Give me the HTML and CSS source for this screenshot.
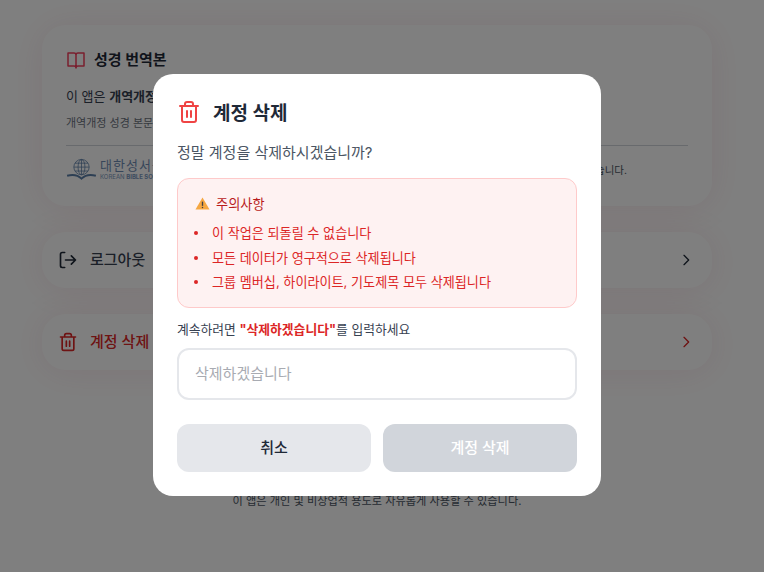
FILE: index.html
```html
<!DOCTYPE html>
<html lang="ko">
<head>
<meta charset="utf-8">
<title>계정 삭제</title>
<link rel="stylesheet" href="styles.css">
</head>
<body>
<main class="page">
  <section class="card info">
    <h2 class="info-title">
      <svg class="book" viewBox="0 0 20 20" fill="none" stroke="#f43f5e" stroke-width="1.500" stroke-linejoin="round" stroke-linecap="round"><path d="M10 18V5a2 2 0 0 0-2-2H2v13h6a2 2 0 0 1 2 2 2 2 0 0 1 2-2h6V3h-6a2 2 0 0 0-2 2"/></svg>
      <span>성경 번역본</span>
    </h2>
    <p class="info-main">이 앱은 <strong>개역개정 성경</strong>을 사용합니다.</p>
    <p class="info-sub">개역개정 성경 본문의 저작권은 대한성서공회에 있습니다.</p>
    <div class="info-foot">
      <div class="logo">
        <svg class="logo-mark" viewBox="0 0 32 24" fill="none" stroke="#5b7fa8" stroke-width="0.8">
          <circle cx="16" cy="9.500" r="8"/><ellipse cx="16" cy="9.500" rx="3.600" ry="8"/><path d="M16 1.500v16M8 9.500h16M9.200 5.400h13.600M9.200 13.600h13.600"/>
          <path d="M1 18.500c5-1.400 11-1 15 3 4-4 10-4.400 15-3" stroke-width="2"/>
        </svg>
        <div class="logo-text"><span class="logo-ko">대한성서공회</span><span class="logo-en">KOREAN <b>BIBLE SOCIETY</b></span></div>
      </div>
      <p class="foot-note">이 성경은 대한성서공회의 허락을 받아 사용하고 있습니다.</p>
    </div>
  </section>

  <button class="card row">
    <svg class="row-icon" viewBox="0 0 24 24" fill="none" stroke="#1f2937" stroke-width="2" stroke-linecap="round" stroke-linejoin="round"><path d="M8 3H5a2 2 0 0 0-2 2v14a2 2 0 0 0 2 2h3"/><path d="M9 12h12M16 7l5 5-5 5"/></svg>
    <span class="row-label">로그아웃</span>
    <svg class="chev" viewBox="0 0 24 24" fill="none" stroke="#1f2937" stroke-width="2" stroke-linecap="round" stroke-linejoin="round"><path d="m9 5 7 7-7 7"/></svg>
  </button>
  <button class="card row danger">
    <svg class="row-icon" viewBox="0 0 24 24" fill="none" stroke="#dc2626" stroke-width="2" stroke-linecap="round" stroke-linejoin="round"><path d="M3 6h18M8 6V4a2 2 0 0 1 2-2h4a2 2 0 0 1 2 2v2M5 6v14a2 2 0 0 0 2 2h10a2 2 0 0 0 2-2V6M10 11v6M14 11v6"/></svg>
    <span class="row-label">계정 삭제</span>
    <svg class="chev" viewBox="0 0 24 24" fill="none" stroke="#dc2626" stroke-width="2" stroke-linecap="round" stroke-linejoin="round"><path d="m9 5 7 7-7 7"/></svg>
  </button>
  <p class="footer">이 앱은 개인 및 비상업적 용도로 자유롭게 사용할 수 있습니다.</p>
</main>

<div class="overlay">
  <div class="dialog">
    <div class="dialog-head">
      <svg class="dialog-icon" viewBox="0 0 24 24" fill="none" stroke="#ef4444" stroke-width="2" stroke-linecap="round" stroke-linejoin="round"><path d="M3 6h18M8 6V4a2 2 0 0 1 2-2h4a2 2 0 0 1 2 2v2M5 6v14a2 2 0 0 0 2 2h10a2 2 0 0 0 2-2V6M10 11v6M14 11v6"/></svg>
      <h1>계정 삭제</h1>
    </div>
    <p class="question">정말 계정을 삭제하시겠습니까?</p>
    <div class="warning">
      <div class="warning-title">
        <svg class="warn-icon" viewBox="0 0 16 16"><path d="M8 1.500 15.500 14.500H.5Z" fill="#f5a742"/><path d="M8 6v4.500" stroke="#3f3f46" stroke-width="1.400"/><circle cx="8" cy="12.300" r=".8" fill="#3f3f46"/></svg>
        <span>주의사항</span>
      </div>
      <ul>
        <li>이 작업은 되돌릴 수 없습니다</li>
        <li>모든 데이터가 영구적으로 삭제됩니다</li>
        <li>그룹 멤버십, 하이라이트, 기도제목 모두 삭제됩니다</li>
      </ul>
    </div>
    <label class="confirm-label" for="confirm">계속하려면 <strong>"삭제하겠습니다"</strong>를 입력하세요</label>
    <input class="confirm-input" id="confirm" type="text" placeholder="삭제하겠습니다">
    <div class="actions">
      <button class="btn cancel">취소</button>
      <button class="btn delete">계정 삭제</button>
    </div>
  </div>
</div>
</body>
</html>
```

FILE: styles.css
```css
* { box-sizing: border-box; }
html, body { margin: 0; height: 100%; }
body {
  background: #fff;
  font-family: Inter, "Noto Sans CJK KR", sans-serif;
  color: #1f2937;
  overflow: hidden;
}
.page {
  display: flex;
  flex-direction: column;
  gap: 26px;
  width: 754px;
  padding: 25px 42px 0;
}
.card {
  background: #fff;
  border: 0;
  border-radius: 24px;
  box-shadow: 0 2px 36px rgba(190, 18, 60, 0.09);
}
.info { height: 181px; padding: 24px; }
.info-title { display: flex; align-items: center; gap: 8px; margin: 0 0 15px; font-size: 15px; font-weight: 700; line-height: 22px; }
.book { width: 20px; height: 20px; }
.info-main { margin: 0 0 9px; font-size: 13px; line-height: 20px; color: #374151; }
.info-sub { margin: 0 0 14px; font-size: 11px; line-height: 16px; color: #6b7280; }
.info-foot { display: flex; align-items: center; justify-content: space-between; border-top: 1px solid #d1d5db; padding: 12px 61px 0 0; }
.logo { display: flex; align-items: center; gap: 3px; }
.logo-mark { width: 31px; height: 23px; }
.logo-text { display: flex; flex-direction: column; }
.logo-ko { font-size: 13px; line-height: 15px; font-weight: 400; color: #6f8db5; letter-spacing: 1px; }
.logo-en { font-size: 6px; line-height: 8px; color: #7a98c0; }
.foot-note { margin: 0; font-size: 10.500px; color: #4b5563; }
.row {
  display: flex;
  align-items: center;
  height: 56px;
  padding: 0 16px;
  font-family: inherit;
  color: #374151;
}
.row-icon { width: 20px; height: 20px; }
.row-label { flex: 1; margin-left: 12px; padding-bottom: 3px; text-align: left; font-size: 15px; font-weight: 500; }
.chev { width: 16px; height: 16px; margin-right: 2px; }
.danger { color: #dc2626; }
.footer { margin: 97px 0 0; text-align: center; font-size: 11.200px; line-height: 16px; color: #4b5563; }
.overlay {
  position: fixed;
  inset: 0;
  padding: 0 10px 2px 0;
  display: flex;
  align-items: center;
  justify-content: center;
  background: rgba(0, 0, 0, 0.5);
}
.dialog {
  width: 448px;
  height: 422px;
  padding: 24px;
  background: #fff;
  border-radius: 20px;
}
.dialog-head { display: flex; align-items: center; gap: 12px; height: 28px; margin-bottom: 16px; }
.dialog-icon { width: 24px; height: 24px; }
.dialog-head h1 { margin: 0 0 2px; font-size: 19px; font-weight: 700; color: #1f2937; }
.question { margin: 0 0 14px; font-size: 15px; line-height: 22px; color: #4b5563; }
.warning {
  height: 130px;
  padding: 14px 16px;
  background: #fef2f2;
  border: 1px solid #fecaca;
  border-radius: 12px;
  margin-bottom: 13px;
}
.warning-title { display: flex; align-items: center; gap: 6px; margin-left: 1px; height: 20px; font-size: 13.200px; color: #b91c1c; font-weight: 400; }
.warn-icon { width: 15px; height: 15px; }
ul { margin: 8px 0 0; padding: 0; list-style: none; color: #dc2626; font-size: 13.100px; }
li { display: flex; align-items: center; gap: 14px; line-height: 24.500px; }
li::before { content: ""; width: 4px; height: 4px; border-radius: 50%; background: #dc2626; }
.confirm-label { display: block; margin-bottom: 9px; font-size: 12.800px; line-height: 18px; color: #374151; }
.confirm-label strong { color: #dc2626; font-weight: 700; }
.confirm-input {
  display: block;
  width: 100%;
  height: 52px;
  padding: 0 16px 1px;
  border: 2px solid #e5e7eb;
  border-radius: 12px;
  font-family: inherit;
  font-size: 15px;
  outline: none;
  margin-bottom: 24px;
}
.confirm-input::placeholder { color: #a8abb2; }
.actions { display: flex; gap: 12px; }
.btn { flex: 1; height: 48px; border: 0; border-radius: 12px; padding: 0 0 3px; font-family: inherit; font-size: 15px; font-weight: 500; }
.cancel { background: #e5e7eb; color: #1f2937; }
.delete { background: #d1d5db; color: #fff; }
```
